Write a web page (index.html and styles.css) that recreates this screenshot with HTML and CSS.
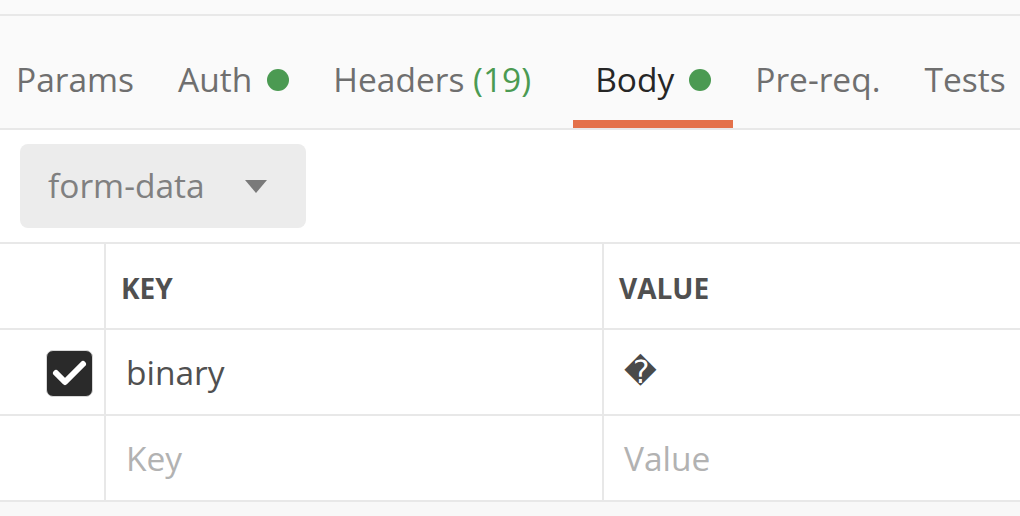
FILE: index.html
```html
<!DOCTYPE html>
<html>
<head>
<meta charset="utf-8">
<link rel="stylesheet" href="styles.css">
</head>
<body>
<div class="page">
  <div class="topstrip"></div>
  <nav class="tabbar">
    <div class="tabs">
      <div class="tab">Params</div>
      <div class="tab">Auth<span class="dot"></span></div>
      <div class="tab tab-headers">Headers&nbsp;<span class="count">(19)</span></div>
      <div class="tab active">Body<span class="dot"></span></div>
      <div class="tab">Pre-req.</div>
      <div class="tab">Tests</div>
    </div>
  </nav>
  <section class="bodytype">
    <div class="select">
      <span class="select-label">form-data</span>
      <svg class="caret" width="22" height="13" viewBox="0 0 22 13"><path d="M0 0 H22 L11 13 Z" fill="#7a7a7a"/></svg>
    </div>
  </section>
  <div class="table">
    <div class="row head">
      <div class="cell check"></div>
      <div class="cell key">KEY</div>
      <div class="cell value">VALUE</div>
    </div>
    <div class="row">
      <div class="cell check">
        <span class="checkbox">
          <svg width="44" height="44" viewBox="0 0 44 44"><path d="M8 22 L17 31 L35 13" fill="none" stroke="#fff" stroke-width="6" stroke-linecap="round" stroke-linejoin="round"/></svg>
        </span>
      </div>
      <div class="cell key text">binary</div>
      <div class="cell value text"><span class="repl">&#xFFFD;</span></div>
    </div>
    <div class="row">
      <div class="cell check"></div>
      <div class="cell key text placeholder">Key</div>
      <div class="cell value text placeholder">Value</div>
    </div>
  </div>
  <div class="footer"></div>
</div>
</body>
</html>
```

FILE: styles.css
```css
html, body {
  margin: 0;
  padding: 0;
}
body {
  background: #fafafa;
  font-family: "Open Sans", "Noto Sans", sans-serif;
  width: 1020px;
  height: 516px;
  overflow: hidden;
}
.page {
  display: flex;
  flex-direction: column;
  height: 516px;
}
.topstrip {
  height: 14px;
  background: #fafafa;
  border-bottom: 2px solid #e8e8e8;
}
.tabbar {
  height: 112px;
  background: #fafafa;
  border-bottom: 2px solid #e8e8e8;
  overflow: hidden;
}
.tabs {
  display: flex;
  height: 112px;
  margin-left: -6px;
}
.tab {
  position: relative;
  display: flex;
  align-items: center;
  box-sizing: border-box;
  height: 112px;
  padding: 14px 22px 0;
  font-size: 33.5px;
  color: #6f6f6f;
  white-space: nowrap;
}
.tab-headers {
  padding-right: 42px;
}
.count {
  color: #4b9a52;
}
.dot {
  display: inline-block;
  width: 22px;
  height: 22px;
  border-radius: 50%;
  background: #4b9a52;
  margin-left: 15px;
  margin-top: 2px;
}
.tab.active {
  color: #262626;
}
.tab.active::after {
  content: "";
  position: absolute;
  left: 0;
  right: 0;
  bottom: 0;
  height: 8px;
  background: #e4714a;
}
.bodytype {
  background: #fff;
  padding: 14px 20px;
  height: 84px;
}
.select {
  box-sizing: border-box;
  width: 286px;
  height: 84px;
  border-radius: 8px;
  background: #ececec;
  display: flex;
  align-items: center;
  padding-left: 28px;
  padding-bottom: 2px;
}
.select-label {
  font-size: 33.5px;
  color: #808080;
}
.caret {
  margin-left: 40px;
  margin-top: 2px;
}
.table {
  background: #fff;
  border-top: 2px solid #e8e8e8;
}
.row {
  display: flex;
  height: 84px;
  border-bottom: 2px solid #e8e8e8;
}
.cell {
  display: flex;
  align-items: center;
  box-sizing: border-box;
}
.cell.check {
  width: 106px;
  border-right: 2px solid #e8e8e8;
  padding-left: 46px;
}
.cell.key {
  width: 498px;
  border-right: 2px solid #e8e8e8;
  padding-left: 15px;
}
.cell.value {
  flex: 1;
  padding-left: 15px;
}
.head .cell {
  font-size: 28px;
  font-weight: 700;
  color: #505050;
  padding-top: 4px;
}
.cell.text {
  font-size: 33.5px;
  color: #505050;
  padding-left: 20px;
}
.cell.placeholder {
  color: #b2b2b2;
}
.checkbox {
  box-sizing: border-box;
  width: 47px;
  height: 47px;
  border-radius: 7px;
  background: #2a2a2a;
  border: 1.5px solid #d8d8d8;
  display: flex;
  align-items: center;
  justify-content: center;
  margin-top: 2px;
}
.repl {
  font-family: "DejaVu Sans", sans-serif;
  font-size: 32px;
  color: #4a4a4a;
}
.footer {
  flex: 1;
  background: #f8f8f8;
}
```
